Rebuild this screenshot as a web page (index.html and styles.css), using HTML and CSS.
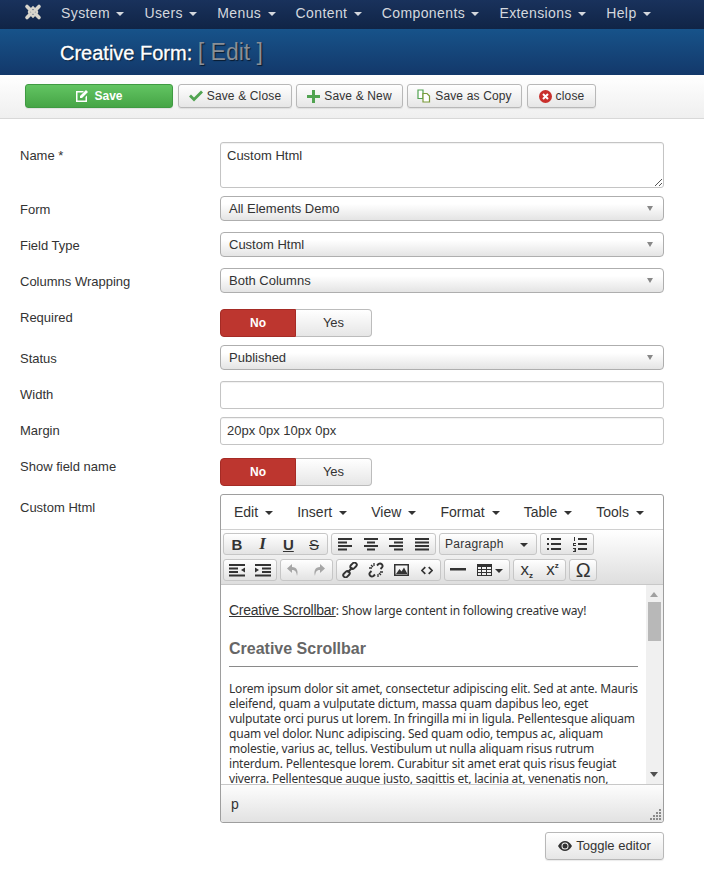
FILE: index.html
```html
<!DOCTYPE html>
<html lang="en">
<head>
<meta charset="utf-8">
<title>Creative Form: [ Edit ]</title>
<link rel="stylesheet" href="styles.css">
</head>
<body>
<nav class="navbar">
  <svg class="logo" viewBox="0 0 18 18" width="18" height="18"><g fill="none" stroke="#d8d5cc" stroke-linecap="round"><path stroke-width="3.600" d="M3 3.500l3 3M15 3.500l-3 3M3 14.500l3-3M15 14.500l-3-3"/><path stroke-width="2.400" d="M6 6.500l6 5M12 6.500l-6 5M5 8.500L9 4.500l4 4M5 9.500l4 4 4-4"/></g></svg>
  <ul class="menu">
    <li>System<i class="caret"></i></li>
    <li>Users<i class="caret"></i></li>
    <li>Menus<i class="caret"></i></li>
    <li>Content<i class="caret"></i></li>
    <li>Components<i class="caret"></i></li>
    <li>Extensions<i class="caret"></i></li>
    <li>Help<i class="caret"></i></li>
  </ul>
</nav>
<header class="titlebar"><h1>Creative Form: <small>[ Edit ]</small></h1></header>
<div class="subhead">
  <button class="btn btn-save"><svg width="14" height="14" viewBox="0 0 14 14"><path fill="#fff" d="M1 2h8L7.500 3.500H2.500v8h8V8L12 6.500V13H1z"/><path fill="#fff" d="M5 7l6-6 2 2-6 6H5z"/></svg>Save</button>
  <button class="btn btn-close"><svg width="14" height="12" viewBox="0 0 14 12"><path fill="#51a351" d="M0 6.500l2-2 3 3L12 .5l2 2-9 9z"/></svg>Save &amp; Close</button>
  <button class="btn btn-new"><svg width="13" height="13" viewBox="0 0 13 13"><path fill="#51a351" d="M5 0h3v5h5v3H8v5H5V8H0V5h5z"/></svg>Save &amp; New</button>
  <button class="btn btn-copy"><svg width="14" height="14" viewBox="0 0 14 14"><path fill="#fff" stroke="#51a351" stroke-width="1.200" d="M1 1h5v8.500H1z"/><path fill="#fff" stroke="#7a9a3a" stroke-width="1.200" d="M6 4.500h4l2.500 2.500v6H6z"/></svg>Save as Copy</button>
  <button class="btn btn-x"><svg width="13" height="13" viewBox="0 0 13 13"><circle cx="6.500" cy="6.500" r="6.500" fill="#c9302c"/><path stroke="#fff" stroke-width="2" d="M4 4l5 5M9 4l-5 5"/></svg>close</button>
</div>
<form class="form">
  <div class="row row-name"><label>Name *</label><div class="textarea">Custom Html<svg class="grip" width="8" height="8" viewBox="0 0 8 8"><path stroke="#555" d="M8 1L1 8M8 5L5 8"/></svg></div></div>
  <div class="row row-sel"><label>Form</label><div class="select">All Elements Demo<i class="sel-arrow"></i></div></div>
  <div class="row row-sel"><label>Field Type</label><div class="select">Custom Html<i class="sel-arrow"></i></div></div>
  <div class="row row-sel"><label>Columns Wrapping</label><div class="select">Both Columns<i class="sel-arrow"></i></div></div>
  <div class="row row-req"><label>Required</label><div class="toggle"><span class="no">No</span><span class="yes">Yes</span></div></div>
  <div class="row row-sel"><label>Status</label><div class="select">Published<i class="sel-arrow"></i></div></div>
  <div class="row row-input"><label>Width</label><div class="input"></div></div>
  <div class="row row-input"><label>Margin</label><div class="input">20px 0px 10px 0px</div></div>
  <div class="row row-show"><label>Show field name</label><div class="toggle"><span class="no">No</span><span class="yes">Yes</span></div></div>
  <div class="row row-editor"><label>Custom Html</label>
    <div class="editor">
      <div class="ed-menu">
        <span>Edit<i class="caret dark"></i></span><span>Insert<i class="caret dark"></i></span><span>View<i class="caret dark"></i></span><span>Format<i class="caret dark"></i></span><span>Table<i class="caret dark"></i></span><span>Tools<i class="caret dark"></i></span>
      </div>
      <div class="ed-tools">
        <div class="tool-row">
          <div class="grp">
            <b class="tb t-b">B</b><b class="tb t-i">I</b><b class="tb t-u">U</b><b class="tb t-s">S</b>
          </div>
          <div class="grp">
            <span class="tb"><svg width="16" height="14" viewBox="0 0 16 14"><path d="M1 1h14v2H1zM1 4.500h9v2H1zM1 8h14v2H1zM1 11.500h9v2H1z" fill="#333"/></svg></span>
            <span class="tb"><svg width="16" height="14" viewBox="0 0 16 14"><path d="M1 1h14v2H1zM4 4.500h8v2H4zM1 8h14v2H1zM4 11.500h8v2H4z" fill="#333"/></svg></span>
            <span class="tb"><svg width="16" height="14" viewBox="0 0 16 14"><path d="M1 1h14v2H1zM6 4.500h9v2H6zM1 8h14v2H1zM6 11.500h9v2H6z" fill="#333"/></svg></span>
            <span class="tb"><svg width="16" height="14" viewBox="0 0 16 14"><path d="M1 1h14v2H1zM1 4.500h14v2H1zM1 8h14v2H1zM1 11.500h14v2H1z" fill="#333"/></svg></span>
          </div>
          <div class="grp listbox">Paragraph<i class="caret dark"></i></div>
          <div class="grp">
            <span class="tb"><svg width="16" height="14" viewBox="0 0 16 14"><path d="M1 1h2v2H1zM1 6h2v2H1zM1 11h2v2H1zM5 1h10v2H5zM5 6h10v2H5zM5 11h10v2H5z" fill="#333"/></svg></span>
            <span class="tb"><svg width="16" height="16" viewBox="0 0 16 16"><path d="M6 2h9v2H6zM6 7h9v2H6zM6 12h9v2H6z" fill="#333"/><path d="M2 1h1v4H2zM1 7h3v1H2v1h2v1H1zM1 12h3v4H1v-1h2v-.5H2v-1h1V13H1z" fill="#333"/></svg></span>
          </div>
        </div>
        <div class="tool-row">
          <div class="grp">
            <span class="tb"><svg width="16" height="14" viewBox="0 0 16 14"><path d="M0 1h16v2H0zM0 4.500h9v2H0zM0 8h9v2H0zM0 11.500h16v2H0zM16 4.500v5l-4-2.500z" fill="#333"/></svg></span>
            <span class="tb"><svg width="16" height="14" viewBox="0 0 16 14"><path d="M0 1h16v2H0zM7 4.500h9v2H7zM7 8h9v2H7zM0 11.500h16v2H0zM0 4.500v5l4-2.500z" fill="#333"/></svg></span>
          </div>
          <div class="grp">
            <span class="tb"><svg width="14" height="14" viewBox="0 0 14 14"><path d="M6 1L1 5.500 6 10V7c3 0 4.500 1.500 5 6 1.500-5 0-9-5-9z" fill="#a6a6a6"/></svg></span>
            <span class="tb"><svg width="14" height="14" viewBox="0 0 14 14"><path d="M8 1l5 4.500L8 10V7c-3 0-4.500 1.500-5 6-1.500-5 0-9 5-9z" fill="#a6a6a6"/></svg></span>
          </div>
          <div class="grp">
            <span class="tb"><svg width="16" height="16" viewBox="0 0 16 16"><g fill="none" stroke="#333" stroke-width="1.900"><rect x="8" y="1.500" width="7" height="4.500" rx="2" transform="rotate(-45 11.500 3.750)"/><rect x="1" y="10" width="7" height="4.500" rx="2" transform="rotate(-45 4.500 12.250)"/><path d="M5.500 10.500l5-5"/></g></svg></span>
            <span class="tb"><svg width="16" height="16" viewBox="0 0 16 16"><g fill="none" stroke="#333" stroke-width="1.900"><path d="M9 3.500l1.500-1.500a2.500 2.500 0 0 1 3.500 3.500L12.500 7M7 12.500L5.500 14A2.500 2.500 0 0 1 2 10.500L3.500 9"/><path d="M6 1v3M1 6h3M10 15v-3M15 10h-3M3 3l2 2M13 13l-2-2" stroke-width="1.300"/></g></svg></span>
            <span class="tb"><svg width="15" height="14" viewBox="0 0 15 14"><path fill-rule="evenodd" d="M0 1h15v12H0zM1.500 2.500v9h12v-9z" fill="#333"/><path d="M2 11l3.500-5 2 2.500L10 4.500l3.500 6.500z" fill="#333"/></svg></span>
            <span class="tb"><svg width="12" height="9" viewBox="0 0 14 10"><path fill="none" stroke="#333" stroke-width="2" d="M5 1L1 5l4 4M9 1l4 4-4 4"/></svg></span>
          </div>
          <div class="grp">
            <span class="tb"><svg width="16" height="4" viewBox="0 0 16 4"><path d="M0 0h16v2.500H0z" fill="#333"/></svg></span>
            <span class="tb wide"><svg width="15" height="12" viewBox="0 0 15 12"><path fill-rule="evenodd" d="M0 0h15v12H0zM1 3v2h3V3zM5 3v2h4V3zM10 3v2h4V3zM1 6v2h3V6zM5 6v2h4V6zM10 6v2h4V6zM1 9v2h3V9zM5 9v2h4V9zM10 9v2h4V9z" fill="#333"/></svg><i class="caret dark"></i></span>
          </div>
          <div class="grp">
            <span class="tb t-sc">x<sub>z</sub></span>
            <span class="tb t-sc">x<sup>z</sup></span>
          </div>
          <div class="grp">
            <span class="tb t-om">Ω</span>
          </div>
        </div>
      </div>
      <div class="ed-body">
        <div class="ed-content">
          <p class="lead"><a>Creative Scrollbar</a>: Show large content in following creative way!</p>
          <h3>Creative Scrollbar</h3>
          <hr>
          <p class="lorem">Lorem ipsum dolor sit amet, consectetur adipiscing elit. Sed at ante. Mauris eleifend, quam a vulputate dictum, massa quam dapibus leo, eget vulputate orci purus ut lorem. In fringilla mi in ligula. Pellentesque aliquam quam vel dolor. Nunc adipiscing. Sed quam odio, tempus ac, aliquam molestie, varius ac, tellus. Vestibulum ut nulla aliquam risus rutrum interdum. Pellentesque lorem. Curabitur sit amet erat quis risus feugiat viverra. Pellentesque augue justo, sagittis et, lacinia at, venenatis non,</p>
        </div>
        <div class="scrollbar"><i class="sb-up"></i><i class="sb-thumb"></i><i class="sb-down"></i></div>
      </div>
      <div class="ed-status">p<svg class="resize" width="11" height="11" viewBox="0 0 11 11"><path fill="#8a8a8a" d="M9 0h2v2H9zM6 3h2v2H6zM9 3h2v2H9zM3 6h2v2H3zM6 6h2v2H6zM9 6h2v2H9zM0 9h2v2H0zM3 9h2v2H3zM6 9h2v2H6zM9 9h2v2H9z"/></svg></div>
    </div>
  </div>
  <div class="toggle-row"><button type="button" class="btn btn-toggle"><svg width="14" height="10" viewBox="0 0 14 10"><path fill-rule="evenodd" fill="#333" d="M0 5c2-3.300 4.300-5 7-5s5 1.700 7 5c-2 3.300-4.300 5-7 5S2 8.300 0 5zm7-3.500a3.500 3.500 0 1 0 0 7 3.500 3.500 0 0 0 0-7z"/><circle cx="7" cy="5" r="2.500" fill="#333"/></svg>Toggle editor</button></div>
</form>
</body>
</html>
```
FILE: styles.css
```css
* { box-sizing: border-box; }
html, body { margin: 0; padding: 0; }
body { width: 704px; height: 886px; overflow: hidden; background: #fff; color: #333; font-family: "Liberation Sans", Arial, sans-serif; font-size: 13px; }

.navbar { height: 29px; display: flex; align-items: flex-start; padding: 3px 0 0 24px; background: linear-gradient(#19325c, #102446); }
.logo { display: block; }
.menu { list-style: none; display: flex; margin: 1px 0 0 19px; padding: 0; gap: 20px; color: #d4d8de; font-size: 14px; letter-spacing: .4px; line-height: 18px; }
.menu li { display: flex; align-items: center; white-space: nowrap; }
.caret { display: inline-block; width: 0; height: 0; margin-left: 6.300px; margin-top: 1px; border-left: 4px solid transparent; border-right: 4px solid transparent; border-top: 4px solid #d4d8de; }
.caret.dark { border-top-color: #333; }

.titlebar { height: 46px; padding-left: 60px; display: flex; align-items: center; background: linear-gradient(#17538a, #13386a); }
.titlebar h1 { margin: 0; font-size: 20px; font-weight: normal; color: #fff; text-shadow: 1px 1px 1px rgba(0,0,0,.6); -webkit-text-stroke: .3px #fff; }
.titlebar small { font-size: 23px; color: #8a8f96; -webkit-text-stroke: 0; }

.subhead { height: 44px; padding: 9px 0 0 25px; display: flex; gap: 4px; align-items: flex-start; background: linear-gradient(#fff, #efefef); border-bottom: 1px solid #d8d8d8; }
.btn { height: 24px; padding: 0; display: flex; align-items: center; justify-content: center; gap: 4px; border: 1px solid #b8b8b8; border-radius: 3px; background: linear-gradient(#fff, #e6e6e6); color: #333; font-family: inherit; font-size: 12px; letter-spacing: .15px; box-shadow: 0 1px 1px rgba(0,0,0,.08); }
.btn-save { width: 148px; margin-right: 1px; gap: 5px; color: #fff; font-weight: bold; letter-spacing: 0; border-color: #3f9a42; background: linear-gradient(#62c462, #46a546); }
.btn-close { width: 114px; }
.btn-new { width: 107px; }
.btn-copy { width: 115px; margin-right: 1px; }
.btn-x { width: 69px; }

.form { padding: 23px 40px 0 20px; }
.row { display: grid; grid-template-columns: 200px 444px; }
.row label { padding-top: 6px; color: #333; }
.row-name { margin-bottom: 8px; }
.row-sel { margin-bottom: 11px; }
.row-req { margin: 16px 0 8px; }
.row-input { margin-bottom: 8px; }
.row-show { margin: 13px 0 8px; }
.row-show label, .row-req label { padding-top: 1px; }
.row-editor label { padding-top: 6px; }

.textarea, .input { border: 1px solid #c4c4c4; border-radius: 3px; background: #fff; padding: 5px 6px; box-shadow: inset 0 1px 1px rgba(0,0,0,.06); }
.textarea { position: relative; height: 46px; }
.grip { position: absolute; right: 1px; bottom: 1px; }
.input { height: 28px; }
.select { position: relative; height: 25px; padding: 0 8px; display: flex; align-items: center; border: 1px solid #aeaeae; border-radius: 4px; background: linear-gradient(#fff 30%, #e4e4e4); }
.sel-arrow { position: absolute; right: 10px; top: 9px; width: 0; height: 0; border-left: 3.500px solid transparent; border-right: 3.500px solid transparent; border-top: 5px solid #888; }

.toggle { display: flex; width: 152px; height: 28px; }
.toggle span { display: flex; align-items: center; justify-content: center; padding-bottom: 1px; }
.toggle .no { width: 76px; color: #fff; font-size: 12px; font-weight: bold; background: #bd362f; border-radius: 4px 0 0 4px; border: 1px solid #a52b25; }
.toggle .yes { width: 76px; background: linear-gradient(#fff, #e6e6e6); border: 1px solid #bcbcbc; border-left: 0; border-radius: 0 4px 4px 0; }

.editor { height: 329px; border: 1px solid #9e9e9e; border-radius: 3px; display: flex; flex-direction: column; background: #fff; }
.ed-menu { height: 35px; padding: 0 19px 1px 13px; display: flex; justify-content: space-between; align-items: center; border-bottom: 1px solid #d0d0d0; font-size: 14px; color: #333; }
.ed-menu .caret { margin-left: 7px; vertical-align: 2px; }
.ed-tools { height: 55px; padding: 3px 0 0 2px; display: flex; flex-direction: column; gap: 4px; background: linear-gradient(#fff, #dedede); border-bottom: 1px solid #c8c8c8; }
.tool-row { display: flex; gap: 3px; height: 22px; }
.grp { display: flex; height: 22px; border: 1px solid #c6c6c6; border-radius: 3px; background: linear-gradient(#fff, #e3e3e3); }
.tb { width: 25.750px; display: flex; align-items: center; justify-content: center; color: #333; font-size: 15px; font-weight: bold; }
.tb.wide { width: 38px; }
.tb.wide .caret { margin-left: 3px; }
.t-i { font-family: "Liberation Serif", serif; font-size: 17px; font-style: italic; }
.t-u { text-decoration: underline; }
.t-s { text-decoration: line-through; font-weight: normal; }
.t-sc { font-size: 17px; font-weight: normal; }
.t-sc sub, .t-sc sup { font-size: 8px; font-weight: bold; line-height: 8px; }
.t-sc sub { margin-top: 11px; }
.t-sc sup { margin-bottom: 9px; }
.t-om { font-size: 20px; font-weight: normal; }
.listbox { width: 98px; padding: 0 8px 0 5px; align-items: center; justify-content: space-between; font-size: 12px; letter-spacing: .3px; color: #333; }
.listbox .caret { margin-left: 0; }

.ed-body { height: 200px; display: flex; overflow: hidden; border-bottom: 1px solid #c8c8c8; }
.ed-content { flex: 1; min-width: 0; padding: 16px 8px 0 8px; color: #333; font-family: "Noto Sans", sans-serif; font-size: 12px; letter-spacing: -.2px; }
.ed-content p { margin: 0; }
.lead { line-height: 18px; }
.lead a { font-family: "Liberation Sans", sans-serif; font-size: 14px; letter-spacing: -.25px; text-decoration: underline; }
.ed-content h3 { margin: 20px 0 0; font-family: "Liberation Sans", sans-serif; font-size: 16px; font-weight: bold; color: #666; line-height: 18px; letter-spacing: 0; }
.ed-content hr { margin: 8px 0 0; border: 0; border-top: 1px solid #8a8a8a; }
.ed-content .lorem { margin-top: 14px; line-height: 15px; }

.scrollbar { position: relative; width: 17px; background: #f0f0f0; }
.sb-up, .sb-down { position: absolute; left: 4px; width: 0; height: 0; border-left: 4px solid transparent; border-right: 4px solid transparent; }
.sb-up { top: 7px; border-bottom: 5px solid #a0a0a0; }
.sb-down { bottom: 7px; border-top: 5px solid #505050; }
.sb-thumb { position: absolute; top: 17px; left: 2px; width: 13px; height: 39px; background: #b8b8b8; }

.ed-status { position: relative; flex: 1; padding: 11px 0 0 10px; font-size: 14px; background: linear-gradient(#fdfdfd, #e2e2e2); border-radius: 0 0 3px 3px; }
.resize { position: absolute; right: 2px; bottom: 2px; }

.toggle-row { display: flex; justify-content: flex-end; margin-top: 9px; }
.btn-toggle { width: 119px; height: 28px; padding-bottom: 1px; gap: 4px; font-size: 13px; letter-spacing: 0; }
```
